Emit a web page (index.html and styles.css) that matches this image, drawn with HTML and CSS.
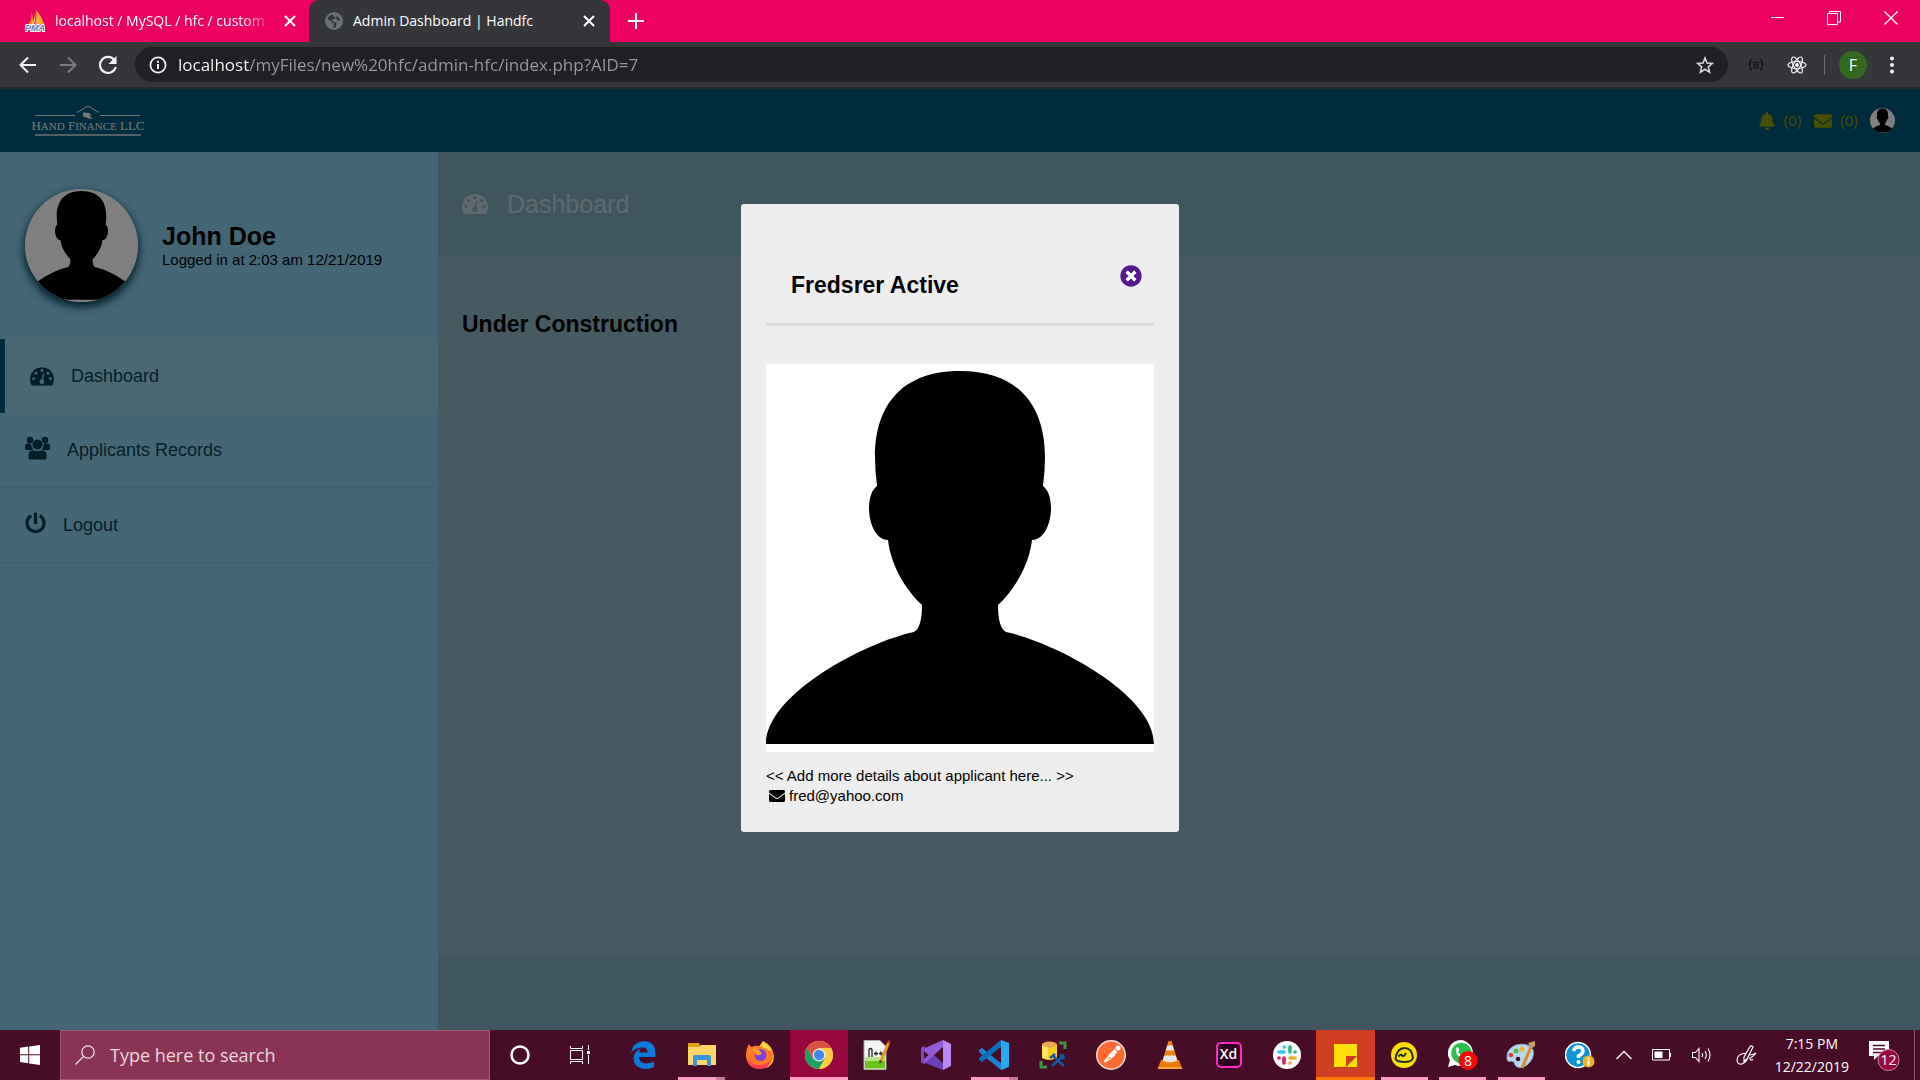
FILE: index.html
```html
<!DOCTYPE html>
<html lang="en">
<head>
<meta charset="utf-8">
<title>Admin Dashboard | Handfc</title>
<link rel="stylesheet" href="styles.css">
</head>
<body>
<svg class="defs" aria-hidden="true">
  <defs>
    <symbol id="person" viewBox="0 0 388 388">
      <path fill="#fff" d="M0 0h388v388H0z"/>
      <path fill="#000" d="M194 7C130 7 109 48 109 93Q109 107 111 122C104 127 103 138 103 146C104 164 112 176 122 176C125 202 140 226 156 241C156 254 154 265 148 268C100 278 0 330 0 380H388C388 330 288 278 240 268C234 265 232 254 232 241C248 226 263 202 266 176C276 176 284 164 285 146C285 138 284 127 277 122Q279 107 279 93C279 48 258 7 194 7z"/>
    </symbol>
    <symbol id="envelope" viewBox="0 64 512 384">
      <path fill="currentColor" d="M502.3 190.8c3.9-3.1 9.7-.2 9.7 4.7V400c0 26.5-21.5 48-48 48H48c-26.5 0-48-21.5-48-48V195.6c0-5 5.7-7.8 9.7-4.7 22.4 17.4 52.1 39.5 154.1 113.6 21.1 15.4 56.7 47.8 92.2 47.6 35.7.3 72-32.8 92.3-47.6 102-74.1 131.6-96.3 154-113.7zM256 320c23.2.4 56.6-29.2 73.4-41.4 132.7-96.3 142.8-104.7 173.4-128.7 5.8-4.5 9.2-11.5 9.2-18.9v-19c0-26.5-21.5-48-48-48H48c-26.5 0-48 21.5-48 48v19c0 7.4 3.4 14.3 9.2 18.9 30.6 23.9 40.7 32.4 173.4 128.7 16.8 12.2 50.2 41.8 73.4 41.4z"/>
    </symbol>
    <mask id="gauge-holes">
      <path fill="#fff" d="M0 0h26v20H0z"/>
      <g fill="#000"><circle cx="4" cy="12.5" r="1.6"/><circle cx="6.5" cy="6.5" r="1.6"/><circle cx="13" cy="3.6" r="1.6"/><circle cx="19.5" cy="6.5" r="1.6"/><circle cx="22" cy="12.5" r="1.6"/><circle cx="13" cy="15.6" r="2.6"/></g>
      <path stroke="#000" stroke-width="1.5" stroke-linecap="round" d="M13.2 14.5L14.8 7.5"/>
    </mask>
    <symbol id="gauge" viewBox="0 0 26 20">
      <path mask="url(#gauge-holes)" fill="currentColor" d="M0 13a13 13 0 0 1 26 0c0 2.400-.6 4.400-1.600 6.300q-.4.700-1.200.700H2.800q-.8 0-1.200-.7C.6 17.400 0 15.400 0 13z"/>
    </symbol>
  </defs>
</svg>

<header class="browser">
  <div class="tabs">
    <div class="tab">
      <svg width="20" height="22" viewBox="0 0 20 22"><path fill="#f89c0e" d="M6 2q2 7-3 13h5Q9 8 6 2z"/><path fill="#f7a935" d="M11 0q1 8-1 14h9Q16 5 11 0z"/><path fill="#ffd08a" d="M10 2q1 7-1 12h-2q3-5 3-12z"/><text x="0" y="21" class="pma">PMA</text></svg>
      <a class="tab-title fade" href="#">localhost / MySQL / hfc / custom</a>
      <button class="icon-btn" aria-label="Close tab"><svg width="12" height="12" viewBox="0 0 12 12"><path stroke="#fff" stroke-width="2" d="M1 1l10 10M11 1L1 11"/></svg></button>
    </div>
    <div class="tab active">
      <svg width="18" height="18" viewBox="0 0 18 18"><circle cx="9" cy="9" r="9" fill="#6b7075"/><path fill="#35363a" d="M8 2.500q-4.500.5-5.500 5l3 1 1 2 2.500 1-1 4q2 .5 3-1l.5-3-3-2-2-.5 1-1.500 2-.5 1-2-2-.5zM12 4l-1 2 1.500 2.500 3 .5Q15 6 12 4z"/></svg>
      <a class="tab-title" href="#">Admin Dashboard | Handfc</a>
      <button class="icon-btn" aria-label="Close tab"><svg width="12" height="12" viewBox="0 0 12 12"><path stroke="#fff" stroke-width="2" d="M1 1l10 10M11 1L1 11"/></svg></button>
    </div>
    <button class="icon-btn new-tab" aria-label="New tab"><svg width="16" height="16" viewBox="0 0 16 16"><path stroke="#fff" stroke-width="2" d="M8 0v16M0 8h16"/></svg></button>
    <div class="window-controls">
      <button class="icon-btn" aria-label="Minimize"><svg width="14" height="14" viewBox="0 0 14 14"><path stroke="#fff" d="M1 6.500h13"/></svg></button>
      <button class="icon-btn" aria-label="Restore"><svg width="14" height="14" viewBox="0 0 14 14"><path fill="none" stroke="#fff" d="M.5 2.500h10v11H.5zM2.500 2.500v-2h11v10.500h-3"/></svg></button>
      <button class="icon-btn" aria-label="Close"><svg width="14" height="14" viewBox="0 0 14 14"><path stroke="#fff" stroke-width="1.300" d="M.5.500l13 13M13.500.500l-13 13"/></svg></button>
    </div>
  </div>
  <div class="toolbar">
    <button class="icon-btn" aria-label="Back"><svg width="20" height="20" viewBox="0 0 20 20"><path fill="none" stroke="#f1f3f4" stroke-width="2" d="M18 10H3M10 2.500L2.500 10l7.500 7.500"/></svg></button>
    <button class="icon-btn" aria-label="Forward"><svg width="20" height="20" viewBox="0 0 20 20"><path fill="none" stroke="#7b7c7f" stroke-width="2" d="M2 10h15M10 2.500l7.500 7.500-7.500 7.500"/></svg></button>
    <button class="icon-btn" aria-label="Reload"><svg width="20" height="20" viewBox="0 0 20 20"><path fill="none" stroke="#f1f3f4" stroke-width="2.200" d="M16.500 5.200A8 8 0 1 0 17.800 12"/><path fill="#f1f3f4" d="M18.500 1v8h-8z"/></svg></button>
    <div class="omnibox">
      <svg width="18" height="18" viewBox="0 0 18 18"><circle cx="9" cy="9" r="7.600" fill="none" stroke="#f1f3f4" stroke-width="1.700"/><path stroke="#f1f3f4" stroke-width="2" d="M9 8v5M9 4.800v2"/></svg>
      <input class="url" type="text" aria-label="Address" value="localhost/myFiles/new%20hfc/admin-hfc/index.php?AID=7">
      <button class="icon-btn" aria-label="Bookmark"><svg width="18" height="18" viewBox="0 0 18 18"><path fill="none" stroke="#d5d6d8" stroke-width="1.600" d="M9 2l2 5 5.400.4-4.100 3.500 1.300 5.300L9 13.300l-4.600 2.900 1.300-5.300L1.600 7.400 7 7z"/></svg></button>
    </div>
    <div class="extensions">
      <button class="icon-btn" aria-label="JSON viewer"><svg width="16" height="12" viewBox="0 0 16 12"><path fill="none" stroke="#151618" stroke-width="1.600" d="M4 1Q2 1 2.200 3.500 2.300 6 .5 6q1.800 0 1.700 2.500Q2 11 4 11M12 1q2 0 1.800 2.500Q13.700 6 15.500 6q-1.800 0-1.700 2.500Q14 11 12 11M5 3.500h6M5 6h6M5 8.500h6"/></svg></button>
      <button class="icon-btn react" aria-label="React tools"><svg width="20" height="20" viewBox="0 0 20 20"><g fill="none" stroke="#f1f3f4" stroke-width="1.200"><ellipse cx="10" cy="10" rx="9" ry="3.500"/><ellipse cx="10" cy="10" rx="9" ry="3.500" transform="rotate(60 10 10)"/><ellipse cx="10" cy="10" rx="9" ry="3.500" transform="rotate(120 10 10)"/></g><circle cx="10" cy="10" r="1.900" fill="#fff"/></svg></button>
      <button class="profile-btn">F</button>
      <button class="icon-btn" aria-label="Menu"><svg width="4" height="18" viewBox="0 0 4 18"><g fill="#f1f3f4"><circle cx="2" cy="2.500" r="2"/><circle cx="2" cy="9" r="2"/><circle cx="2" cy="15.500" r="2"/></g></svg></button>
    </div>
  </div>
</header>

<div class="page">
  <header class="site-header">
    <svg class="logo" width="114" height="36" viewBox="0 0 114 36" role="img" aria-label="Hand Finance LLC">
      <g fill="none" stroke="#f0f0f0"><path d="M4 12.500h40M69 12.500h40M46 9.500L57 3l11 6.500"/><path stroke-width="2" opacity=".7" d="M4 32h106"/></g>
      <path fill="#f0f0f0" d="M52 9.500l6 .5 3 2-3 .5 4 3h-4l-6-2z"/>
      <text class="logo-text" x="57" y="27" text-anchor="middle">H<tspan class="small">AND</tspan> F<tspan class="small">INANCE</tspan> LLC</text>
    </svg>
    <nav class="alerts" aria-label="Alerts">
      <a href="#"><svg width="16" height="18" viewBox="0 0 448 512"><path fill="currentColor" d="M224 512c35.320 0 63.970-28.650 63.970-64H160.030c0 35.350 28.650 64 63.970 64zm215.390-149.710c-19.320-20.760-55.470-51.990-55.470-154.290 0-77.700-54.480-139.900-127.940-155.160V32c0-17.670-14.320-32-31.980-32s-31.980 14.330-31.980 32v20.840C118.560 68.100 64.080 130.300 64.080 208c0 102.300-36.150 133.530-55.470 154.290-6 6.450-8.660 14.160-8.610 21.710.11 16.400 12.980 32 32.100 32h383.800c19.120 0 32-15.600 32.100-32 .05-7.550-2.610-15.270-8.610-21.710z"/></svg><span>(0)</span></a>
      <a href="#"><svg width="18" height="14"><use href="#envelope"/></svg><span>(0)</span></a>
      <svg class="mini-avatar" width="25" height="25"><use href="#person"/></svg>
    </nav>
  </header>
  <div class="layout">
    <aside class="sidebar">
      <div class="user">
        <svg class="avatar" width="113" height="113"><use href="#person"/></svg>
        <div>
          <h2 class="user-name">John Doe</h2>
          <p class="user-meta">Logged in at 2:03 am 12/21/2019</p>
        </div>
      </div>
      <nav class="menu" aria-label="Main">
        <a class="menu-item current" href="#"><svg width="24" height="19"><use href="#gauge"/></svg>Dashboard</a>
        <a class="menu-item" href="#"><svg width="25" height="24" viewBox="0 0 25 24"><g fill="currentColor"><circle cx="5" cy="4" r="3.300"/><circle cx="20" cy="4" r="3.300"/><circle cx="12.500" cy="8.500" r="5"/><path d="M0 13V10q0-2.500 2.500-2.500H6q0 3.800 2.500 6.500H1q-1 0-1-1zM25 13V10q0-2.500-2.500-2.500H19q0 3.800-2.500 6.500H24q1 0 1-1zM3.500 22v-3q0-4.500 4.500-4.500 4.500 1.500 9 0 4.500 0 4.500 4.500v3q0 1.500-1.500 1.500H5Q3.500 23.500 3.500 22z"/></g></svg>Applicants Records</a>
        <a class="menu-item" href="#"><svg width="21" height="22" viewBox="0 0 512 512"><path fill="currentColor" d="M400 54.100c63 45 104 118.600 104 201.900 0 136.800-110.800 247.700-247.500 248C120 504.300 8.200 393 8 256.400 7.900 173.100 48.900 99.300 111.800 54.200c11.700-8.300 28-4.800 35 7.700L162.600 90c5.900 10.500 3.100 23.800-6.600 31-41.500 30.800-68 79.600-68 134.900-.1 92.300 74.500 168.100 168 168.100 91.600 0 168.600-74.200 168-169.100-.3-51.800-24.700-101.800-68.100-134-9.700-7.200-12.400-20.500-6.500-30.900l15.800-28.100c7-12.400 23.200-16.100 34.800-7.800zM296 264V24c0-13.300-10.700-24-24-24h-32c-13.300 0-24 10.700-24 24v240c0 13.300 10.700 24 24 24h32c13.300 0 24-10.700 24-24z"/></svg>Logout</a>
      </nav>
    </aside>
    <main class="content">
      <h1 class="content-title"><svg width="26" height="20"><use href="#gauge"/></svg>Dashboard</h1>
      <section class="content-body"><h2>Under Construction</h2></section>
      <footer class="content-footer"></footer>
    </main>
  </div>
  <div class="overlay">
    <section class="modal" role="dialog" aria-labelledby="applicant-name">
      <header class="modal-header">
        <h2 id="applicant-name">Fredsrer Active</h2>
        <button class="icon-btn modal-close" aria-label="Close dialog"><svg width="22" height="22" viewBox="0 0 512 512"><path fill="#fff" d="M120 120h272v272H120z"/><path fill="#551a8b" d="M256 8C119 8 8 119 8 256s111 248 248 248 248-111 248-248S393 8 256 8zm121.600 313.100c4.700 4.700 4.700 12.300 0 17L338 377.600c-4.700 4.700-12.300 4.700-17 0L256 312l-65.100 65.600c-4.700 4.700-12.300 4.700-17 0L134.400 338c-4.700-4.700-4.700-12.300 0-17l65.600-65-65.600-65.100c-4.700-4.700-4.700-12.300 0-17l39.600-39.600c4.700-4.700 12.300-4.700 17 0l65 65.700 65.100-65.600c4.700-4.700 12.300-4.700 17 0l39.600 39.600c4.700 4.700 4.700 12.300 0 17L312 256l65.600 65.100z"/></svg></button>
      </header>
      <svg class="photo" viewBox="0 0 388 388" role="img" aria-label="Applicant photo"><use href="#person"/></svg>
      <p class="details">&lt;&lt; Add more details about applicant here... &gt;&gt;</p>
      <p class="details email"><svg width="16" height="12"><use href="#envelope"/></svg>fred@yahoo.com</p>
    </section>
  </div>
</div>

<footer class="taskbar">
  <button class="task-btn" aria-label="Start"><svg width="20" height="20" viewBox="0 0 20 20"><path fill="#fff" d="M0 2.800L8.200 1.600V9.300H0zM9.200 1.500L20 0v9.300H9.200zM0 10.300h8.200v7.900L0 17zM9.200 10.300H20V20L9.200 18.500z"/></svg></button>
  <label class="search">
    <svg width="20" height="20" viewBox="0 0 20 20"><circle cx="13" cy="7" r="6.200" fill="none" stroke="#f0dfe6" stroke-width="1.300"/><path stroke="#f0dfe6" stroke-width="1.300" d="M8.600 11.400L.5 19.500"/></svg>
    <input type="text" placeholder="Type here to search" aria-label="Search">
  </label>
  <button class="task-btn" aria-label="Cortana"><svg width="20" height="20" viewBox="0 0 20 20"><circle cx="10" cy="10" r="8.500" fill="none" stroke="#fff" stroke-width="2.500"/></svg></button>
  <button class="task-btn" aria-label="Task view"><svg width="20" height="20" viewBox="0 0 20 20"><path fill="none" stroke="#fff" d="M.5 1v2.500h12V1M.5 5.500h12v9H.5zM.5 19v-2.500h12V19M18.500 0v5M18.500 10v9"/><path fill="#fff" d="M17 6h3v3h-3z"/></svg></button>
  <div class="apps">
    <button class="app" aria-label="Edge"><svg width="26" height="28" viewBox="0 0 26 28"><path fill="#0b7bdb" d="M1 12Q3 1 13.500 0 25 0 25.500 12v4H9q.5 6 7 6.500 4 0 8-2V26q-4 2-9 2Q4 27 3.500 17.500 4 10.500 11 7 9 9 9 11.500h8.500q0-5-5-5Q5 6.500 1 12z"/></svg></button>
    <button class="app running multi" aria-label="File Explorer"><svg width="28" height="24" viewBox="0 0 28 24"><path fill="#e59f06" d="M0 1q0-1 1-1h10l2 4H0z"/><path fill="#ffd766" d="M0 4h12l1-2h15v20H0z"/><path fill="#3b95d8" d="M5 14q0-2 2-2h14q2 0 2 2v9h-4v-6H9v6H5z"/></svg></button>
    <button class="app" aria-label="Firefox"><svg width="28" height="28" viewBox="0 0 28 28"><path fill="#ffbd2e" d="M17 0q10 5 11 15 0 10-9 12L10 10z"/><path fill="#ff7a22" d="M3 3q1 3 3 3 3-2 6-1l14 4q3 8-2 14-5 5-11 5Q1 27 0 15 0 7 3 3z"/><path fill="#ff3a55" d="M1 17q5 8 13 7 7 0 11-5-2 9-12 9Q3 27 1 17z"/><circle cx="14.500" cy="14" r="6" fill="#7b3fe4"/><path fill="#ff9a24" d="M6 8q5-2 8 2l2 2q-2 3-5 2-2-1-5-6z"/><path fill="#ffe04a" d="M17 0q4 5 9 10-5-1-9-4-1-3 0-6z"/></svg></button>
    <button class="app running focused" aria-label="Chrome"><svg width="28" height="28" viewBox="0 0 28 28"><circle cx="14" cy="14" r="14" fill="#ffcd40"/><path fill="#dd5144" d="M1.900 7A14 14 0 0 1 26.100 7H14L8 17.500z"/><path fill="#1aa260" d="M1.900 7A14 14 0 0 0 14 28l6-10.500-12 0z"/><path fill="#ffcd40" d="M14 28l6-10.500Q21 10 14 7h12.100A14 14 0 0 1 14 28z"/><circle cx="14" cy="14" r="6.400" fill="#f1f1f1"/><circle cx="14" cy="14" r="5.200" fill="#4587f4"/></svg></button>
    <button class="app" aria-label="Notepad++"><svg width="28" height="30" viewBox="0 0 28 30"><path fill="#f5f5f5" stroke="#aaa" d="M1 .5h16l6 6v23H1z"/><path fill="#b9e48d" d="M2 17h20v6H2z"/><path fill="#69c41c" d="M2 21h20v7.500H2z"/><path fill="none" stroke="#222" stroke-width="1.300" d="M6 17V9.500q1.500-2 3 0V17M11 13.500h4M13 11.500v4M16 13.500h4M18 11.500v4"/><path stroke="#e89b1c" stroke-width="3" d="M25.500 3L18 21"/><path stroke="#c83f2f" stroke-width="3" d="M26.500 1l-1 2"/><path fill="#333" d="M16.500 24v-4l2.500 1z"/></svg></button>
    <button class="app" aria-label="Visual Studio"><svg width="30" height="30" viewBox="0 0 30 30"><path fill="#6b3fb5" d="M0 8l3-2 20 18-1 6L4 23z"/><path fill="#8f5bd6" d="M0 22l3 2L23 6l-1-6L4 8z"/><path fill="#8249c4" d="M0 8l3-2v18l-3-2z"/><path fill="#b98af5" d="M22 0l8 4v22l-8 4z"/><path fill="#470c26" d="M3 11l4.500 4L3 19zM22 9v12l-8-6z"/></svg></button>
    <button class="app running multi" aria-label="Visual Studio Code"><svg width="30" height="30" viewBox="0 0 30 30"><path fill="#1b82cf" d="M0 10l3-2 20 16-1 6L0 12z"/><path fill="#0b6fbd" d="M0 20l3 2L23 6l-1-6L0 18z"/><path fill="#2aa9f2" d="M22 0l8 3v24l-8 3z"/><path fill="#470c26" d="M22 9v12l-8-6z"/></svg></button>
    <button class="app" aria-label="SQL tools"><svg width="28" height="28" viewBox="0 0 28 28"><path fill="none" stroke="#3f9448" stroke-width="3" d="M20 2h6v6M2 20v6h6"/><path fill="#f7cf1f" d="M3 3h15v14q-8 4-15 0z"/><path fill="#fbe567" d="M3 3h6v15l-6-1z"/><ellipse cx="10.500" cy="3.500" rx="7.500" ry="3" fill="#e9a94f"/><path stroke="#12579f" stroke-width="2.500" d="M13 25L25 14M13 14l12 11M11 17l5-4M22 13v4h4"/></svg></button>
    <button class="app" aria-label="Postman"><svg width="30" height="30" viewBox="0 0 30 30"><circle cx="15" cy="15" r="14.300" fill="#fd6b35" stroke="#fbe3da" stroke-width="1.400"/><circle cx="22" cy="8" r="2.500" fill="#fff"/><path stroke="#fff" stroke-width="4" d="M20 10.500l-6 6"/><path stroke="#fff" stroke-width="1.500" d="M15 14l-7 8M19 15l-4 3-6 4"/></svg></button>
    <button class="app" aria-label="VLC"><svg width="26" height="28" viewBox="0 0 26 28"><path fill="#e87705" d="M4 19h18l3.500 9H.5z"/><path fill="#f9a637" d="M1.500 26h23l.5 2H1z"/><path fill="#f08016" d="M11.500 0h3L21 21q-8 4-16 0z"/><path fill="#e6e6e6" d="M10.300 4.500h5.400l1.500 5H8.800zM7.300 14.500h11.400l1.500 5q-7 3.500-14.400 0z"/></svg></button>
    <button class="app" aria-label="Adobe XD"><span class="xd">Xd</span></button>
    <button class="app" aria-label="Slack"><svg width="28" height="28" viewBox="0 0 28 28"><circle cx="14" cy="14" r="14" fill="#fff"/><g fill="none" stroke-width="3.600" stroke-linecap="round"><path stroke="#36c5f0" d="M6 11h5M11.300 6v.1"/><path stroke="#2eb67d" d="M17 6v5M22 11h.1"/><path stroke="#e01e5a" d="M11 17v5M6 17h.1"/><path stroke="#ecb22e" d="M17 17h5M17 22v.1"/></g></svg></button>
    <button class="app running notes" aria-label="Sticky Notes"><svg width="23" height="23" viewBox="0 0 23 23"><path fill="#ffdf05" d="M0 0h23v12L12 23H0z"/><path fill="#ffdf05" d="M23 12v11H12z"/><path fill="#cf3d22" d="M12 12h11L12 23z"/></svg></button>
    <button class="app running" aria-label="Basecamp"><svg width="26" height="26" viewBox="0 0 26 26"><circle cx="13" cy="13" r="13" fill="#fae100"/><path fill="none" stroke="#22352f" stroke-width="2" d="M7.500 14.500q2.500-3 3.500-1 1.500 2 4-2.500M4.500 17Q6 6 13.500 6t8.500 10q-1 4-8.500 4t-9-3z"/></svg></button>
    <button class="app running" aria-label="WhatsApp"><svg width="30" height="30" viewBox="0 0 30 30"><path fill="#fff" d="M13 0a13 13 0 1 1-6 25L0 27l2-7A13 13 0 0 1 13 0z"/><circle cx="13.500" cy="13" r="10.300" fill="#29c04d"/><path fill="#fff" d="M8 8q2-2 3 1v2l-1 1q2 3 5 4l2-1 2 2q-2 3-6 1-6-3-5-10z"/><circle cx="20" cy="20.500" r="9.500" fill="#f00a0a"/><text x="20" y="26" text-anchor="middle" class="count">8</text></svg></button>
    <button class="app running" aria-label="Paint"><svg width="30" height="28" viewBox="0 0 30 28"><path fill="#b9d9ef" stroke="#86b0d0" d="M1 18Q0 8 10 4q12-3 17 5 2 8-6 15-8 5-12 0 0-4-4-4-3 2-4-2z"/><circle cx="5" cy="14" r="2.300" fill="#e04437"/><circle cx="10" cy="10" r="2.500" fill="#58b947"/><circle cx="16" cy="8" r="2.500" fill="#f4b52b"/><circle cx="12" cy="18" r="2.300" fill="#470c26"/><path stroke="#e08a26" stroke-width="3" d="M25 6L16 27"/><path fill="#c69a64" d="M22 2l7-2v5l-4 3z"/></svg></button>
    <button class="app" aria-label="Help"><svg width="30" height="28" viewBox="0 0 30 28"><circle cx="13" cy="14" r="12.500" fill="#0f94d2" stroke="#fff" stroke-width="1.500"/><path fill="none" stroke="#fff" stroke-width="3.500" d="M8.500 10q1-4 5-4 4.500.5 4.500 4 0 2.500-4.500 5v2"/><circle cx="13.500" cy="21" r="2" fill="#fff"/><circle cx="23.500" cy="20.500" r="6" fill="#f1b21e"/><path stroke="#fff" stroke-width="2" d="M23.500 19.500v5M23.500 16.500v2"/></svg></button>
  </div>
  <div class="tray">
    <button class="icon-btn" aria-label="Hidden icons"><svg width="16" height="10" viewBox="0 0 16 10"><path fill="none" stroke="#fff" stroke-width="1.300" d="M.5 9L8 1.500 15.500 9"/></svg></button>
    <button class="icon-btn" aria-label="Battery"><svg width="20" height="12" viewBox="0 0 20 12"><path fill="none" stroke="#fff" d="M.5.500h17v10.500H.5zM18.500 4v4"/><path fill="#fff" d="M2.500 2.500h8v6.500h-8z"/></svg></button>
    <button class="icon-btn" aria-label="Volume"><svg width="20" height="16" viewBox="0 0 20 16"><path fill="none" stroke="#fff" stroke-width="1.100" d="M.5 5.500h3l3.500-4v13l-3.500-4h-3zM10 6q1.200 2 0 4M13 4q2.500 4 0 8M16 1.500q4 6.500 0 13"/></svg></button>
    <button class="icon-btn pen" aria-label="Pen"><svg width="21" height="20" viewBox="0 0 21 20"><path fill="none" stroke="#fff" stroke-width="1.200" d="M8 12L14 1.500q1.500-1.500 3 .5L11 14l-3 2zM10.500 8Q1 9 1 15q.5 5 5 4 5-2 7-9 4 0 7-2-3 4-6 5 0 3 3 1.500"/></svg></button>
    <time class="clock"><span>7:15 PM</span><span>12/22/2019</span></time>
    <button class="icon-btn" aria-label="Notifications"><svg width="32" height="32" viewBox="0 0 32 32"><path fill="#fff" d="M0 2h20v15H9l-4 4v-4H0z"/><path stroke="#470c26" stroke-width="1.300" d="M4 6.500h12M4 10h12M4 13.500h8"/><circle cx="19.500" cy="21" r="10.500" fill="#99073f" stroke="#c98ba4"/><text x="19.500" y="26" text-anchor="middle" class="count">12</text></svg></button>
  </div>
</footer>
</body>
</html>
```
FILE: styles.css
```css
* { box-sizing: border-box; }

body {
  margin: 0;
  min-height: 100vh;
  display: flex;
  flex-direction: column;
  font-family: "Liberation Sans", Arial, sans-serif;
  font-size: 15px;
  color: #000;
}

h1, h2, p { margin: 0; }
a { color: inherit; text-decoration: none; }
svg { display: block; flex: none; }
button, input { font: inherit; color: inherit; border: 0; background: none; padding: 0; outline: 0; }
.defs { position: absolute; width: 0; height: 0; }
.icon-btn { display: flex; align-items: center; justify-content: center; }

/* Browser frame */
.browser { font-family: "Open Sans", "Noto Sans", sans-serif; color: #fff; }
.tabs { display: flex; height: 42px; background: #ed0060; }
.tab { display: flex; align-items: center; gap: 10px; width: 309px; padding: 0 13px 0 25px; }
.tab.active { width: 301px; padding: 0 15px 0 16px; background: #35363a; border-radius: 10px 10px 0 0; }
.tab-title { flex: 1; font-size: 14px; line-height: 20px; white-space: nowrap; }
.fade { -webkit-mask-image: linear-gradient(to right, #000 85%, transparent); mask-image: linear-gradient(to right, #000 85%, transparent); }
.pma { font: italic bold 9px "Liberation Sans", sans-serif; fill: #6c78af; stroke: #fff; stroke-width: 2px; paint-order: stroke; }
.new-tab { margin-left: 18px; }
.window-controls { display: flex; gap: 43px; margin-left: auto; padding: 0 22px 6px 0; }

.toolbar { display: flex; align-items: center; height: 47px; padding: 0 26px 0 18px; gap: 20px; background: #35363a; border-bottom: 2px solid #28292c; }
.omnibox { flex: 1; display: flex; align-items: center; gap: 11px; height: 35px; padding: 0 14px; border-radius: 18px; background: #202124; margin-left: -3px; }
.url {
  flex: 1;
  font-size: 17px;
  line-height: 24px;
  color: transparent;
  background: linear-gradient(to right, #fff 71px, #9a9b9d 71px);
  -webkit-background-clip: text;
  background-clip: text;
}
.extensions { display: flex; align-items: center; gap: 23px; }
.react { padding-right: 17px; border-right: 1px solid #6c6d70; }
.profile-btn { width: 28px; height: 28px; margin-left: -9px; border-radius: 50%; background: #33691e; font-size: 16px; line-height: 28px; }

/* Site */
.page { flex: 1; position: relative; display: flex; flex-direction: column; }
.site-header { display: flex; align-items: center; justify-content: space-between; height: 63px; padding: 0 25px 0 31px; background: #00567a; }
.logo-text { font: 13px "Liberation Serif", serif; fill: #f0f0f0; }
.logo-text .small { font-size: 11px; }
.alerts { display: flex; align-items: center; gap: 12px; color: #8f9c00; }
.alerts a { display: flex; align-items: center; gap: 8px; }
.mini-avatar { border-radius: 50%; }

.layout { flex: 1; display: grid; grid-template-columns: 438px 1fr; }
.sidebar { background: #88ccea; }
.user { display: flex; align-items: center; gap: 24px; padding: 37px 25px; }
.avatar { border-radius: 50%; box-shadow: 0 4px 8px 1px #00364d; }
.user-name { font-size: 25px; line-height: 28px; }
.user-meta { font-size: 15px; line-height: 20px; }
.menu-item { display: flex; align-items: center; gap: 17px; height: 75px; padding-left: 25px; border-bottom: 1px solid #80bfdb; font-size: 18px; color: #083c50; }
.menu-item svg { margin-bottom: 4px; }
.menu-item.current { height: 74px; border-bottom: 0; background: #94d0e8; box-shadow: inset 5px 0 #00567a; padding-left: 30px; }
.menu-item.current svg { margin-bottom: 0; }

.content { display: flex; flex-direction: column; background: #8eb4c4; }
.content-title { display: flex; align-items: center; gap: 19px; height: 104px; padding-left: 24px; background: #7eacbe; font-size: 25px; font-weight: 400; color: #c0d4dc; }
.content-body { flex: 1; padding: 54px 24px; }
.content-body h2, .modal h2 { font-size: 23px; line-height: 28px; }
.content-footer { height: 74px; background: #7eacbe; }

.overlay { position: absolute; inset: 0; display: flex; justify-content: center; align-items: flex-start; padding-top: 115px; background: rgba(0, 0, 0, .5); }
.modal { width: 438px; padding: 60px 25px 26px; border-radius: 3px; background: #eee; }
.modal-header { display: flex; justify-content: space-between; align-items: flex-start; height: 62px; margin-bottom: 38px; padding: 1px 12px 0 25px; border-bottom: 3px solid #dcdcdc; }
.modal-header h2 { padding-top: 6px; }
.photo { width: 100%; margin-bottom: 14px; }
.details { line-height: 20px; }
.email { display: flex; align-items: center; gap: 4px; padding-left: 3px; }

/* Taskbar */
.taskbar { display: flex; height: 50px; background: #470c26; color: #fff; font-family: "Open Sans", "Noto Sans", sans-serif; }
.task-btn { width: 60px; display: flex; align-items: center; justify-content: center; }
.search { display: flex; align-items: center; gap: 15px; width: 430px; padding-left: 14px; border: 1px solid #a35a78; background: #8a3455; }
.search input { flex: 1; font-size: 18px; }
.search input::placeholder { color: #ecd6df; opacity: 1; }
.apps { flex: none; display: grid; grid-template-columns: repeat(17, 1fr); width: 995px; margin-left: 4px; }
.app { display: flex; align-items: center; justify-content: center; background: linear-gradient(#ff9ec4, #ff9ec4) center bottom / 0 3px no-repeat; }
.running { background-size: 47px 3px; }
.multi { background-image: linear-gradient(to right, #ff9ec4 38px, #c57b9b 38px); }
.focused { background-color: #99073f; background-size: 100% 3px; }
.notes { background-color: #cf3d22; background-image: linear-gradient(#ff7800, #ff7800); background-size: 100% 3px; }
.xd { width: 26px; height: 26px; border: 2px solid #ff2bc2; border-radius: 5px; background: #2e001e; font-size: 14px; font-weight: 600; line-height: 20px; }
.count { font: 14px "Open Sans", sans-serif; fill: #fff; }
.tray { display: flex; align-items: center; gap: 20px; margin: 0 5px 0 auto; padding-right: 13px; border-right: 1px solid #8a5f70; }
.pen { margin-left: 4px; }
.clock { display: flex; flex-direction: column; align-items: center; margin-left: -2px; font-size: 14px; line-height: 23px; }
```
